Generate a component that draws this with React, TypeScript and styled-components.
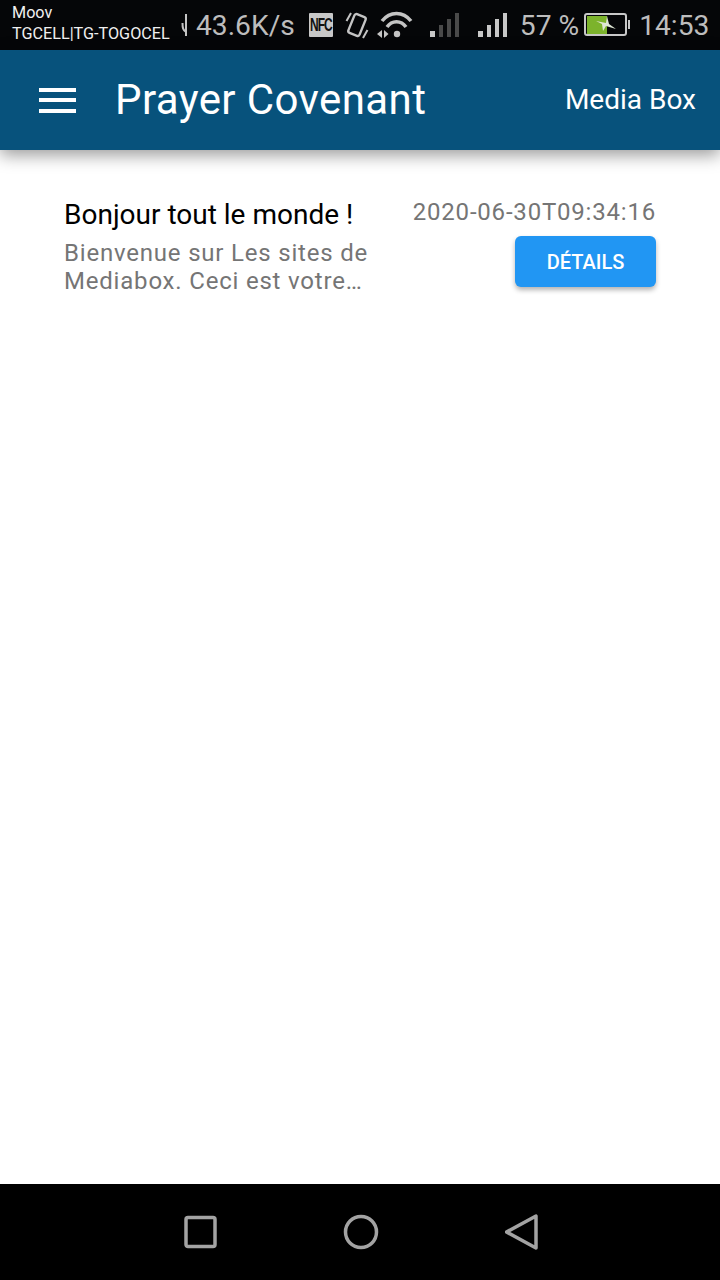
import React from 'react'
import styled, { createGlobalStyle } from 'styled-components'

const GlobalStyle = createGlobalStyle`
  html, body {
    margin: 0;
    padding: 0;
    background: #fff;
  }
  * {
    box-sizing: border-box;
  }
`

const Page = styled.div`
  width: 720px;
  height: 1280px;
  display: flex;
  flex-direction: column;
  overflow: hidden;
  font-family: Roboto, "Liberation Sans", sans-serif;
`

const StatusBar = styled.div`
  height: 50px;
  flex: none;
  background: #050608;
  display: flex;
  align-items: center;
  padding: 0 0 0 12px;
  color: #c9c9c9;
`

const Carrier = styled.div`
  width: 169px;
  flex: none;
  font-size: 16.2px;
  line-height: 21px;
  color: #f0f0f0;
  white-space: nowrap;
  margin-top: -5px;
`

const StatusText = styled.span<{ $ml: number }>`
  font-size: 28.2px;
  line-height: 34px;
  padding-top: 2px;
  white-space: nowrap;
  color: #bdbdbd;
  margin-left: ${(p) => p.$ml}px;
`

const StatusIcons = styled.div`
  display: flex;
  align-items: center;
  flex: 1;
`

const StatusIcon = styled.svg<{ $ml?: number }>`
  display: block;
  flex: none;
  margin-left: ${(p) => p.$ml || 0}px;
`

const NfcBadge = styled.div`
  width: 24px;
  height: 24px;
  flex: none;
  margin-left: 14px;
  border-radius: 1px;
  background: #c8c8c8;
  color: #111;
  display: flex;
  align-items: center;
  justify-content: center;
  span {
    display: block;
    font-family: "Liberation Sans", sans-serif;
    font-size: 12px;
    font-weight: 700;
    line-height: 14px;
    letter-spacing: -1px;
    transform: scaleY(1.5);
  }
`

const AppBar = styled.header`
  height: 100px;
  flex: none;
  background: #07527c;
  display: flex;
  align-items: center;
  padding: 0 24px 0 39px;
  color: #fff;
  box-shadow: 0 5px 16px rgba(0, 0, 0, 0.4);
  position: relative;
`

const Burger = styled.div`
  width: 37px;
  height: 25px;
  flex: none;
  display: flex;
  flex-direction: column;
  justify-content: space-between;
  span {
    display: block;
    height: 4px;
    background: #fff;
  }
`

const Title = styled.h1`
  margin: 0 0 0 39px;
  font-size: 42px;
  font-weight: 400;
  line-height: 50px;
  letter-spacing: 0.4px;
  flex: 1;
  white-space: nowrap;
`

const BoxLink = styled.div`
  font-size: 28px;
  white-space: nowrap;
  padding-bottom: 2px;
`

const Main = styled.main`
  flex: 1;
  background: #fff;
  padding: 45px 64px 0;
`

const Item = styled.div`
  display: flex;
  justify-content: space-between;
`

const ItemText = styled.div`
  width: 310px;
`

const ItemTitle = styled.div`
  font-size: 28px;
  line-height: 40px;
  color: #000;
  white-space: nowrap;
`

const ItemBody = styled.div`
  margin-top: 4px;
  font-size: 24px;
  line-height: 28px;
  letter-spacing: 0.8px;
  color: #757575;
  white-space: nowrap;
`

const ItemSide = styled.div`
  display: flex;
  flex-direction: column;
  align-items: flex-end;
`

const ItemDate = styled.div`
  font-size: 24px;
  line-height: 34px;
  letter-spacing: 0.8px;
  color: #757575;
  white-space: nowrap;
`

const DetailButton = styled.button`
  margin-top: 7px;
  width: 141px;
  height: 51px;
  border: 0;
  border-radius: 6px;
  background: #2196f3;
  color: #fff;
  font-family: Roboto, sans-serif;
  font-size: 20px;
  font-weight: 500;
  box-shadow: 0 3px 5px rgba(0, 0, 0, 0.3);
  padding: 0;
`

const NavBar = styled.nav`
  height: 96px;
  flex: none;
  background: #000;
  display: flex;
  align-items: center;
  justify-content: center;
  gap: 126px;
  padding-left: 2px;
`

const NavIcon = styled.svg`
  display: block;
  flex: none;
`

const signalBars = [
  { x: 1, y: 19, w: 5, h: 6 },
  { x: 10, y: 13, w: 4, h: 12 },
  { x: 18, y: 7, w: 4, h: 18 },
  { x: 26, y: 1, w: 4, h: 24 },
]

function Signal({ ml, off }: { ml: number; off?: boolean }) {
  return (
    <StatusIcon $ml={ml} width="31" height="26" viewBox="0 0 31 26">
      {signalBars.map((b, i) => (
        <rect key={i} x={b.x} y={b.y} width={b.w} height={b.h} fill={off && i > 0 ? '#4a4a4a' : '#c8c8c8'} />
      ))}
    </StatusIcon>
  )
}

export default function App() {
  return (
    <Page>
      <GlobalStyle />
      <StatusBar>
        <Carrier>
          Moov
          <br />
          TGCELL|TG-TOGOCEL
        </Carrier>
        <StatusIcons>
          <StatusIcon width="9" height="24" viewBox="0 0 9 24">
            <path d="M5 1v22M5 19C2 17 1.500 15 1.500 10" stroke="#c4c4c4" strokeWidth="2" fill="none" />
          </StatusIcon>
          <StatusText $ml={6}>43.6K/s</StatusText>
          <NfcBadge>
            <span>NFC</span>
          </NfcBadge>
          <StatusIcon $ml={12} width="24" height="28" viewBox="0 0 24 28">
            <g fill="none" stroke="#c4c4c4">
              <rect x="6" y="4" width="12" height="20" rx="2" transform="rotate(22 12 14)" strokeWidth="2.400" />
              <path d="M1.500 10L6 2M18 27l4.500-8" strokeWidth="2" />
            </g>
          </StatusIcon>
          <StatusIcon $ml={7} width="37" height="28" viewBox="0 0 37 28">
            <g fill="none" stroke="#c4c4c4" strokeWidth="3.600">
              <path d="M6 10C14 0 27 0 35 10" />
              <path d="M11 16C16 9 25 9 30 16" />
            </g>
            <circle cx="21" cy="23" r="3.200" fill="#c4c4c4" />
            <path d="M6 19v8l-5-4zM8 19v8l4.500-4z" fill="#c4c4c4" />
          </StatusIcon>
          <Signal ml={16} off />
          <Signal ml={17} />
          <StatusText $ml={12}>57 %</StatusText>
          <StatusIcon $ml={5} width="46" height="24" viewBox="0 0 46 24">
            <rect x="3" y="3" width="20" height="18" fill="#7cb32c" />
            <rect x="1" y="1" width="41" height="21" rx="2" fill="none" stroke="#c8c8c8" strokeWidth="2" />
            <rect x="44" y="7" width="2" height="9" fill="#c8c8c8" />
            <path d="M12 8l10 2 1-7 2 8 7 5-10-3-3 5-1-7z" fill="#dfe6d5" />
          </StatusIcon>
          <StatusText $ml={9}>14:53</StatusText>
        </StatusIcons>
      </StatusBar>
      <AppBar>
        <Burger>
          <span />
          <span />
          <span />
        </Burger>
        <Title>Prayer Covenant</Title>
        <BoxLink>Media Box</BoxLink>
      </AppBar>
      <Main>
        <Item>
          <ItemText>
            <ItemTitle>Bonjour tout le monde !</ItemTitle>
            <ItemBody>
              Bienvenue sur Les sites de
              <br />
              Mediabox. Ceci est votre…
            </ItemBody>
          </ItemText>
          <ItemSide>
            <ItemDate>2020-06-30T09:34:16</ItemDate>
            <DetailButton>DÉTAILS</DetailButton>
          </ItemSide>
        </Item>
      </Main>
      <NavBar>
        <NavIcon width="33" height="34" viewBox="0 0 33 34">
          <rect x="2" y="2.500" width="29" height="29" rx="2" fill="none" stroke="#a3a3a3" strokeWidth="3.500" />
        </NavIcon>
        <NavIcon width="36" height="36" viewBox="0 0 36 36">
          <circle cx="18" cy="18" r="15.500" fill="none" stroke="#a3a3a3" strokeWidth="3.500" />
        </NavIcon>
        <NavIcon width="34" height="38" viewBox="0 0 34 38">
          <path d="M31 3v32L1.500 19z" fill="none" stroke="#a3a3a3" strokeWidth="3.500" strokeLinejoin="round" />
        </NavIcon>
      </NavBar>
    </Page>
  )
}
